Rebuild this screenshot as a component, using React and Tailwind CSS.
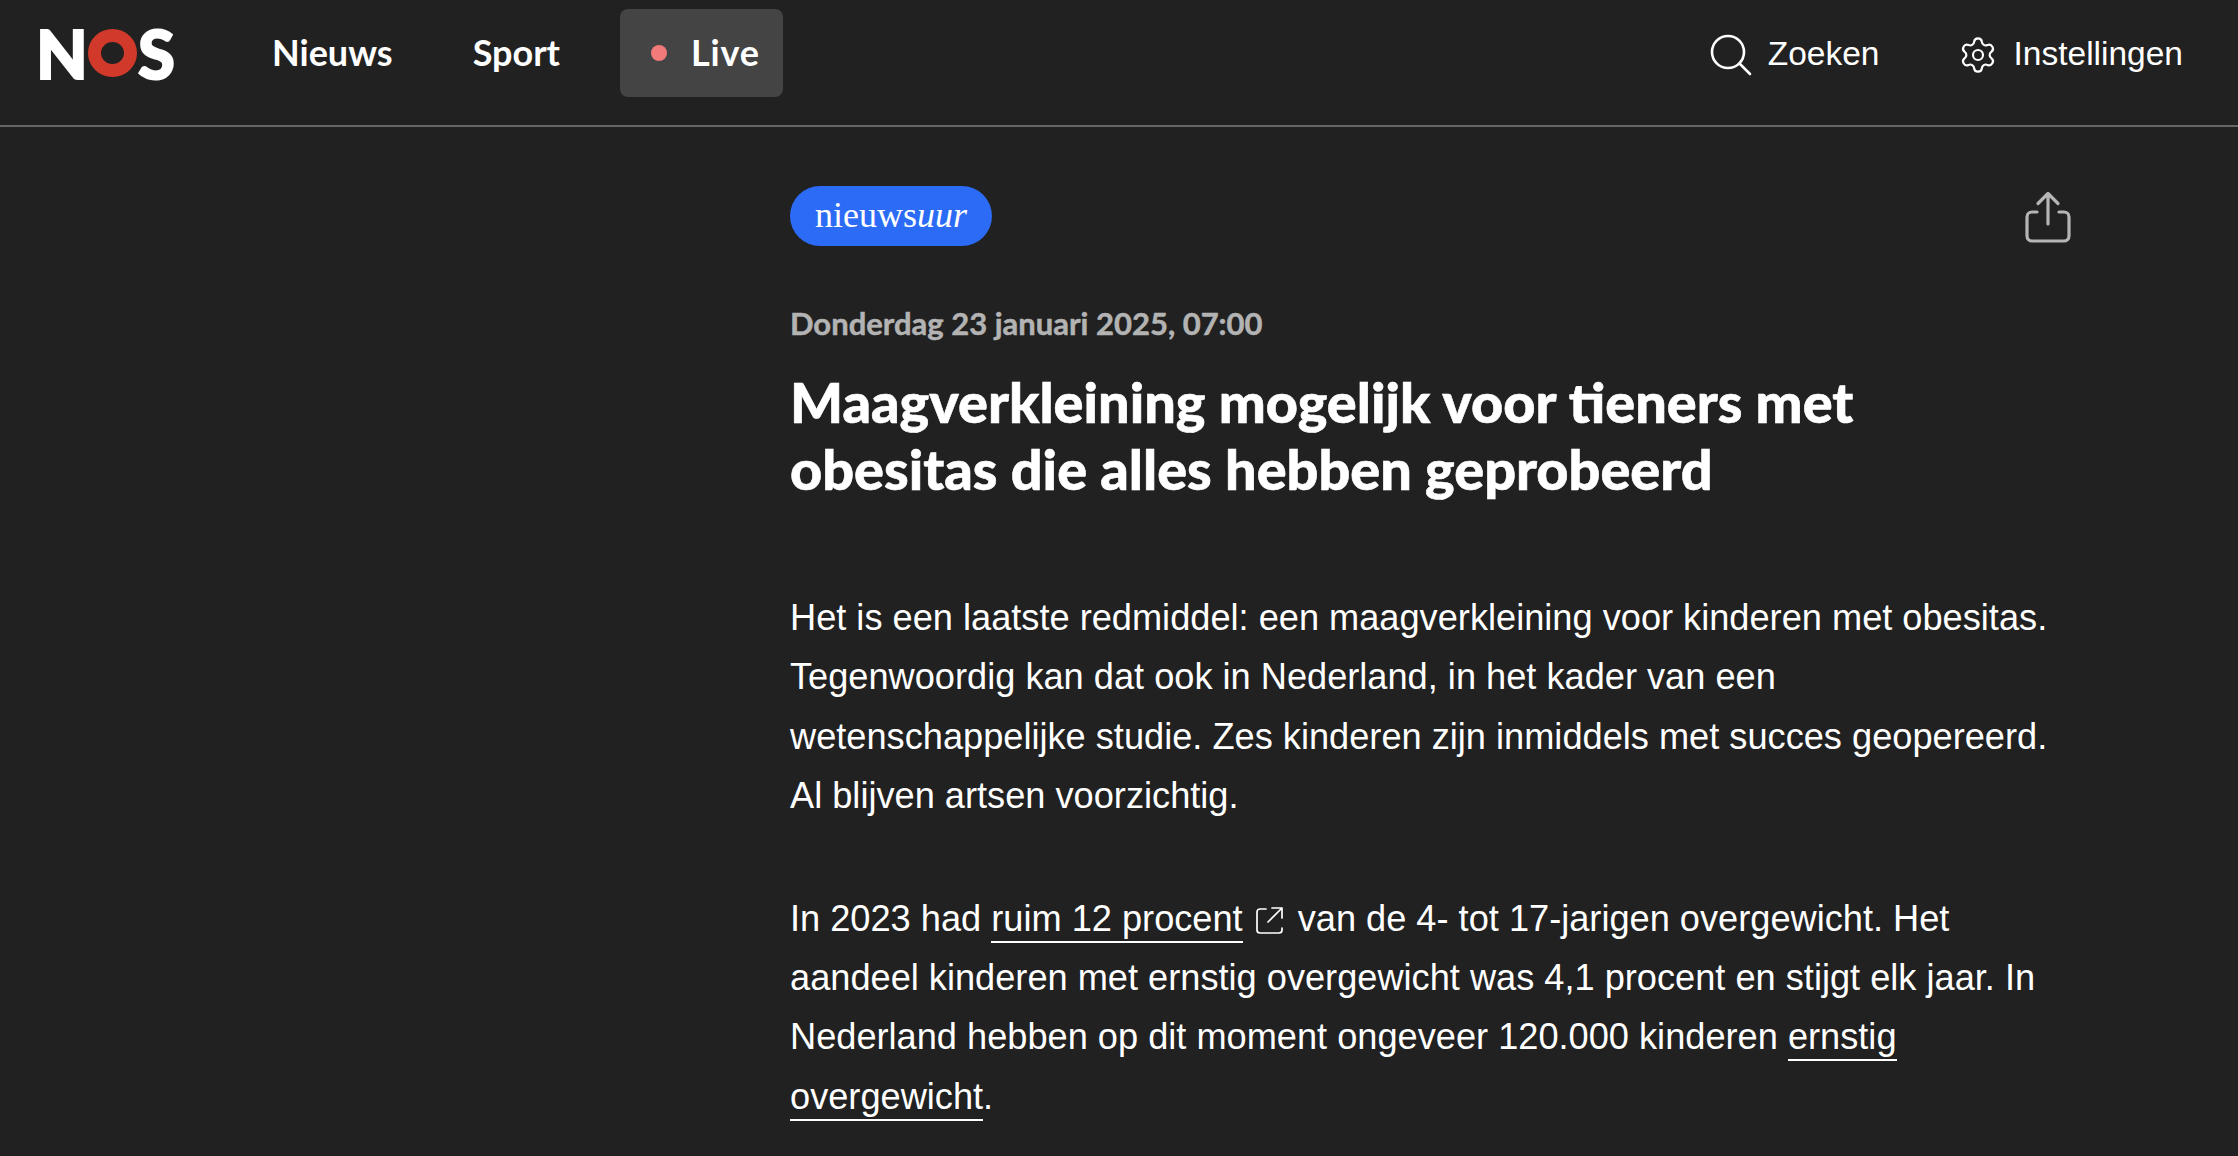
import React from "react";
import { Settings } from "lucide-react";

const Link = ({ children }) => (
  <span className="border-b-2 border-white pb-[2px]">{children}</span>
);

export default function App() {
  return (
    <div className="h-[1156px] w-[2238px] overflow-hidden bg-[#212121] text-white font-['Liberation_Sans',sans-serif]">
      <header className="h-[127px] border-b-2 border-[#666666]">
        <div className="flex h-[125px] w-full items-center pb-[19px] pl-[41px] pr-[55px]">
          <div className="flex h-[50px] w-[135px] shrink-0 items-center font-['Lato',sans-serif] text-[67px] font-black leading-none [-webkit-text-stroke:2px_white]">
            <span className="-ml-[5px] w-[52px] shrink-0">N</span>
            <span className="h-[48px] w-[49px] shrink-0 rounded-[50%] border-[13px] border-[#d13a2a]" />
            <span className="ml-[1px] shrink-0">S</span>
          </div>
          <nav className="ml-[96px] flex items-center font-['Lato',sans-serif] text-[36px] font-bold">
            <span className="pb-[3px]">Nieuws</span>
            <span className="ml-[80px] pb-[3px]">Sport</span>
            <div className="ml-[60px] flex h-[88px] w-[163px] items-center rounded-[8px] bg-[#444444] pl-[31px]">
              <span className="h-[16px] w-[16px] rounded-full bg-[#f27a7a]" />
              <span className="ml-[24px] pb-[3px] tracking-[0.8px]">Live</span>
            </div>
          </nav>
          <div className="ml-auto mt-[3px] flex items-center text-[33.5px]">
            <svg width="42" height="42" viewBox="0 0 42 42" fill="none" stroke="white" strokeWidth="2.6" strokeLinecap="round">
              <circle cx="18" cy="18" r="16" />
              <path d="M29.5 29.5L40 40" />
            </svg>
            <span className="ml-[16px]">Zoeken</span>
            <Settings className="ml-[78px]" size={40} strokeWidth={1.3} />
            <span className="ml-[16px]">Instellingen</span>
          </div>
        </div>
      </header>
      <main className="ml-[790px] w-[1282px]">
        <div className="flex items-start justify-between pt-[59px]">
          <span className="flex h-[60px] w-[202px] items-center justify-center rounded-full bg-[#2b6bf6] pb-[2px] font-['Liberation_Serif',serif] text-[36px]">
            nieuws<i>uur</i>
          </span>
          <svg className="mt-[5px] mr-[1px]" width="46" height="52" viewBox="0 0 46 52" fill="none" stroke="#b5b5b5" strokeWidth="3.2" strokeLinecap="round" strokeLinejoin="round">
            <path d="M23 33V3M13 12.5L23 2.5L33 12.5" />
            <path d="M12 21H7a5 5 0 0 0-5 5v19a5 5 0 0 0 5 5h32a5 5 0 0 0 5-5V26a5 5 0 0 0-5-5h-5" />
          </svg>
        </div>
        <p className="mt-[57px] font-['Lato',sans-serif] text-[31px] font-bold leading-[40px] text-[#b3b3b3] [-webkit-text-stroke:0.5px_#b3b3b3]">
          Donderdag 23 januari 2025, 07:00
        </p>
        <h1 className="mt-[25px] w-[1150px] font-['Lato',sans-serif] text-[55.8px] font-black leading-[67px] [-webkit-text-stroke:0.6px_white]">
          Maagverkleining mogelijk voor tieners met obesitas die alles hebben geprobeerd
        </h1>
        <p className="mt-[86px] text-[36.2px] leading-[59.4px]">
          Het is een laatste redmiddel: een maagverkleining voor kinderen met obesitas. Tegenwoordig kan dat ook in Nederland, in het kader van een wetenschappelijke studie. Zes kinderen zijn inmiddels met succes geopereerd. Al blijven artsen voorzichtig.
        </p>
        <p className="mt-[63px] text-[36.2px] leading-[59.4px]">
          In 2023 had <Link>ruim 12 procent</Link>
          <svg className="ml-[13px] mr-[14px] inline-block align-[-3px]" width="28" height="28" viewBox="0 0 28 28" fill="none" stroke="white" strokeWidth="1.7" strokeLinecap="round" strokeLinejoin="round">
            <path d="M10 3H4a3 3 0 0 0-3 3v18a3 3 0 0 0 3 3h19a3 3 0 0 0 3-3v-2" />
            <path d="M12 16L26 2M16 2h10v10" />
          </svg>
          van de 4- tot 17-jarigen overgewicht. Het aandeel kinderen met ernstig overgewicht was 4,1 procent en stijgt elk jaar. In Nederland hebben op dit moment ongeveer 120.000 kinderen <Link>ernstig overgewicht</Link>.
        </p>
      </main>
    </div>
  );
}
